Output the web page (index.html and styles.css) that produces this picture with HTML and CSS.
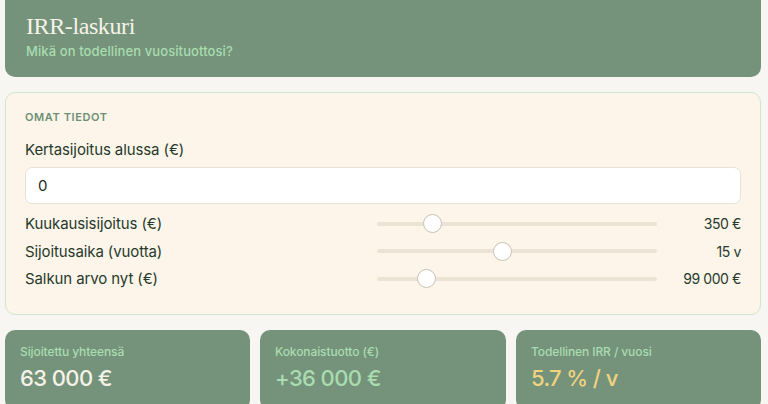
FILE: index.html
```html
<!DOCTYPE html>
<html lang="fi">
<head>
<meta charset="utf-8">
<title>IRR-laskuri</title>
<link rel="stylesheet" href="styles.css">
</head>
<body>
<div class="page">
  <header class="hero">
    <h1 class="hero-title">IRR-laskuri</h1>
    <p class="hero-sub">Mikä on todellinen vuosituottosi?</p>
  </header>

  <section class="panel">
    <h2 class="panel-heading">OMAT TIEDOT</h2>
    <label class="field-label" for="lump">Kertasijoitus alussa (€)</label>
    <input class="text-input" id="lump" type="text" value="0">

    <div class="row">
      <span class="row-label">Kuukausisijoitus (€)</span>
      <input class="slider" type="range" min="0" max="2000" step="50" value="350">
      <span class="row-value">350 €</span>
    </div>
    <div class="row">
      <span class="row-label">Sijoitusaika (vuotta)</span>
      <input class="slider" type="range" min="1" max="32.6" step="0.1" value="15">
      <span class="row-value">15 v</span>
    </div>
    <div class="row">
      <span class="row-label">Salkun arvo nyt (€)</span>
      <input class="slider" type="range" min="0" max="640000" step="1000" value="99000">
      <span class="row-value">99 000 €</span>
    </div>
  </section>

  <section class="cards">
    <div class="card">
      <div class="card-label">Sijoitettu yhteensä</div>
      <div class="card-value">63 000 €</div>
    </div>
    <div class="card">
      <div class="card-label">Kokonaistuotto (€)</div>
      <div class="card-value card-value-green">+36 000 €</div>
    </div>
    <div class="card">
      <div class="card-label">Todellinen IRR / vuosi</div>
      <div class="card-value card-value-gold">5.7 % / v</div>
    </div>
  </section>
</div>
</body>
</html>
```
FILE: styles.css
```css
* { box-sizing: border-box; }

html, body {
  margin: 0;
  padding: 0;
}

body {
  background: #f8f6f2;
  font-family: Inter, "Noto Sans", sans-serif;
  color: #263a2c;
  overflow: hidden;
}

.page {
  width: 756px;
  margin-left: 5px;
  display: flex;
  flex-direction: column;
  gap: 15px;
}

.hero {
  background: #74937a;
  border-radius: 0 0 10px 10px;
  height: 77px;
  padding: 12px 21px 0;
}

.hero-title {
  margin: 0;
  font-family: "Liberation Serif", "DejaVu Serif", serif;
  font-weight: 400;
  font-size: 24px;
  line-height: 29px;
  letter-spacing: -0.4px;
  color: #f7f2e8;
}

.hero-sub {
  margin: 2px 0 0;
  font-size: 13px;
  line-height: 16px;
  letter-spacing: 0.1px;
  color: #a9dcb0;
  font-weight: 500;
}

.panel {
  background: #fdf5e9;
  border: 1px solid #cde6cc;
  border-radius: 10px;
  height: 223px;
  padding: 17px 19px 0;
}

.panel-heading {
  margin: 0;
  font-size: 11px;
  line-height: 14px;
  font-weight: 600;
  letter-spacing: 0.6px;
  color: #6e8f74;
}

.field-label {
  display: block;
  margin-top: 16px;
  font-size: 15px;
  line-height: 20px;
  letter-spacing: -0.1px;
  color: #263a2c;
}

.text-input {
  display: block;
  width: 100%;
  height: 37px;
  margin-top: 7px;
  padding: 0 12px;
  border: 1px solid #e8e1d6;
  border-radius: 7px;
  background: #ffffff;
  font-family: inherit;
  font-size: 15px;
  color: #1f2a22;
  outline: none;
}

.row {
  display: flex;
  align-items: center;
  height: 27.5px;
}

.text-input + .row { margin-top: 6px; }

.row-label {
  width: 352px;
  font-size: 15px;
  letter-spacing: -0.1px;
  color: #263a2c;
}

.slider {
  -webkit-appearance: none;
  appearance: none;
  width: 280px;
  height: 20px;
  margin: 0;
  background: transparent;
}

.slider::-webkit-slider-runnable-track {
  height: 4px;
  border-radius: 2px;
  background: #ece3d5;
}

.slider::-webkit-slider-thumb {
  -webkit-appearance: none;
  appearance: none;
  width: 19px;
  height: 19px;
  margin-top: -7.5px;
  border-radius: 50%;
  background: #ffffff;
  border: 1px solid #c9c1b5;
}

.row-value {
  flex: 1;
  text-align: right;
  font-size: 14px;
  letter-spacing: -0.4px;
  color: #263a2c;
}

.cards {
  display: grid;
  grid-template-columns: 245px 246px 245px;
  gap: 10px;
}

.card {
  background: #74937a;
  border-radius: 10px;
  height: 80px;
  padding: 14px 15px 0;
}

.card-label {
  font-size: 12px;
  line-height: 16px;
  font-weight: 500;
  letter-spacing: -0.1px;
  color: #a9dcb0;
}

.card-value {
  margin-top: 4px;
  font-size: 22px;
  line-height: 28px;
  font-weight: 500;
  letter-spacing: -0.6px;
  color: #f7f2e8;
}

.card-value-green { color: #a9dcb0; }
.card-value-gold { color: #f1d27f; }
```
